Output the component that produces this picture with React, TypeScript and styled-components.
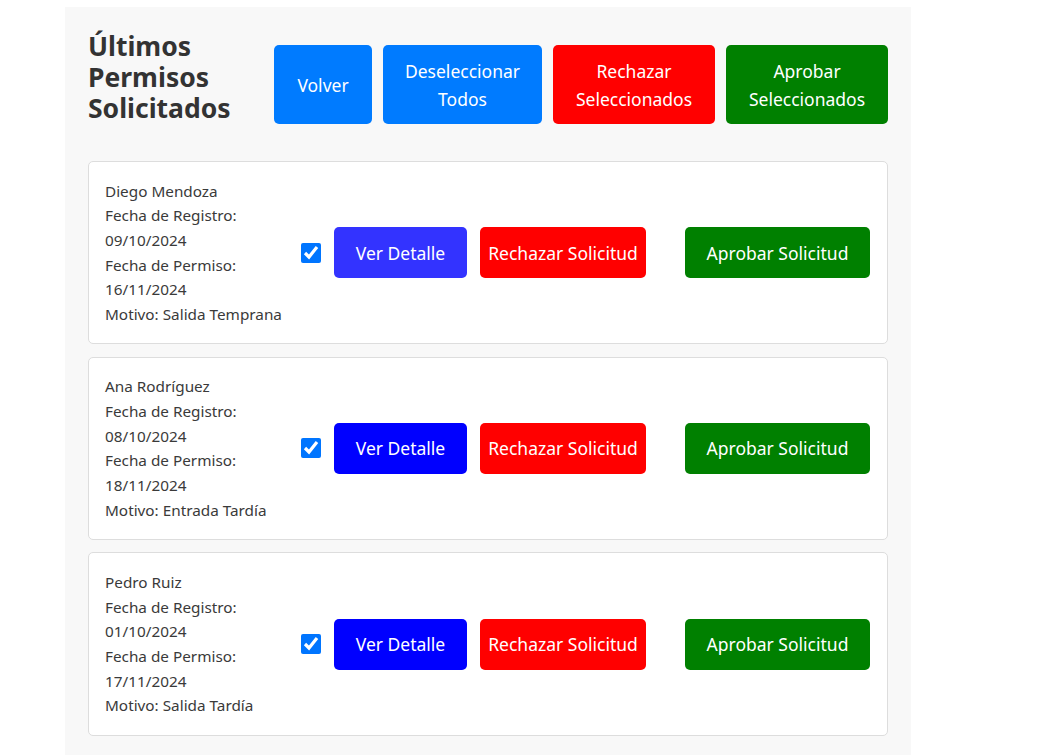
import styled, { createGlobalStyle } from 'styled-components'

const GlobalStyle = createGlobalStyle`
  body {
    margin: 0;
    background: #fff;
    font-family: 'Noto Sans', 'Open Sans', sans-serif;
    color: #333;
  }
`

const Page = styled.div`
  padding: 7px 0 0 65px;
`

const Panel = styled.div`
  width: 846px;
  box-sizing: border-box;
  background: #f8f8f8;
  padding: 32px 23px 20px 23px;
`

const Header = styled.div`
  display: flex;
  justify-content: space-between;
  align-items: flex-start;
  margin-bottom: 37px;
`

const Title = styled.h1`
  margin: -8px 0 0;
  font-size: 26.5px;
  line-height: 31px;
  font-weight: 700;
  color: #333;
  width: 175px;
`

const HeaderActions = styled.div`
  display: flex;
  gap: 11px;
  margin-top: 6px;
`

const colours = {
  primary: '#007bff',
  danger: '#ff0000',
  success: '#008000',
  detail: '#0000ff',
  detailHover: '#3333ff',
}

type Tone = keyof typeof colours

const BigButton = styled.button<{ $tone: Tone; $w: number }>`
  width: ${({ $w }) => $w}px;
  height: 79px;
  border: none;
  border-radius: 5px;
  background: ${({ $tone }) => colours[$tone]};
  color: #fff;
  font-family: inherit;
  font-size: 17.5px;
  line-height: 28px;
  padding: 0 6px;
  cursor: pointer;
`

const List = styled.div`
  display: flex;
  flex-direction: column;
  gap: 12.5px;
`

const Card = styled.div`
  background: #fff;
  border: 1px solid #ddd;
  border-radius: 5px;
  padding: 16.5px 17px 16.5px 16px;
  display: flex;
  align-items: center;
`

const Info = styled.div`
  width: 196px;
  font-size: 15.3px;
  line-height: 24.7px;
  color: #3a3a3a;
`

const Check = styled.input`
  width: 20px;
  height: 20px;
  margin: 0 13px 0 0;
  accent-color: #0075ff;
`

const ActionButton = styled.button<{ $tone: Tone; $w: number }>`
  width: ${({ $w }) => $w}px;
  height: 51px;
  border: none;
  border-radius: 5px;
  background: ${({ $tone }) => colours[$tone]};
  color: #fff;
  font-family: inherit;
  font-size: 17.5px;
  padding: 0;
  cursor: pointer;
  margin-right: 13px;
  &:last-child {
    margin-right: 0;
    margin-left: 26px;
  }
`

const requests = [
  { name: 'Diego Mendoza', reg: '09/10/2024', perm: '16/11/2024', reason: 'Salida Temprana', hover: true },
  { name: 'Ana Rodríguez', reg: '08/10/2024', perm: '18/11/2024', reason: 'Entrada Tardía', hover: false },
  { name: 'Pedro Ruiz', reg: '01/10/2024', perm: '17/11/2024', reason: 'Salida Tardía', hover: false },
]

export default function App() {
  return (
    <>
      <GlobalStyle />
      <Page>
        <Panel>
          <Header>
            <Title>Últimos Permisos Solicitados</Title>
            <HeaderActions>
              <BigButton $tone="primary" $w={98}>Volver</BigButton>
              <BigButton $tone="primary" $w={159}>Deseleccionar Todos</BigButton>
              <BigButton $tone="danger" $w={162}>Rechazar Seleccionados</BigButton>
              <BigButton $tone="success" $w={162}>Aprobar Seleccionados</BigButton>
            </HeaderActions>
          </Header>
          <List>
            {requests.map((r) => (
              <Card key={r.name}>
                <Info>
                  <div>{r.name}</div>
                  <div>Fecha de Registro:</div>
                  <div>{r.reg}</div>
                  <div>Fecha de Permiso:</div>
                  <div>{r.perm}</div>
                  <div>Motivo: {r.reason}</div>
                </Info>
                <Check type="checkbox" defaultChecked />
                <ActionButton $tone={r.hover ? 'detailHover' : 'detail'} $w={133}>
                  Ver Detalle
                </ActionButton>
                <ActionButton $tone="danger" $w={166}>Rechazar Solicitud</ActionButton>
                <ActionButton $tone="success" $w={185}>Aprobar Solicitud</ActionButton>
              </Card>
            ))}
          </List>
        </Panel>
      </Page>
    </>
  )
}
